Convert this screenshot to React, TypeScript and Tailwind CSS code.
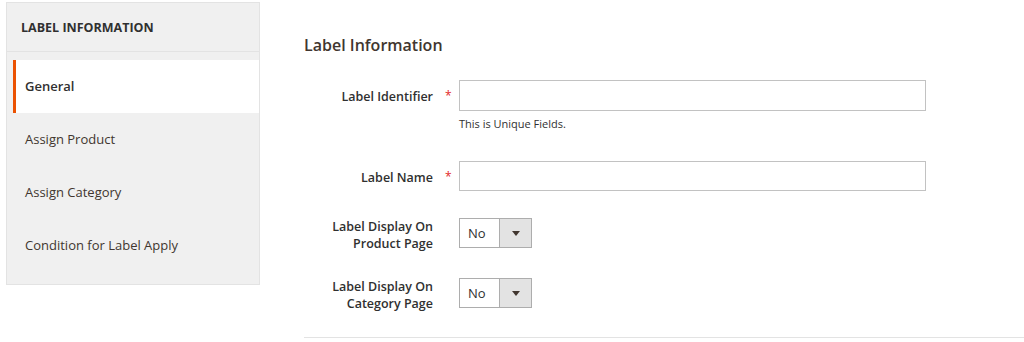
const tabs = ["Assign Product", "Assign Category", "Condition for Label Apply"];

function Field({ label, required, multi, children }: { label: React.ReactNode; required?: boolean; multi?: boolean; children: React.ReactNode }) {
  return (
    <div className="flex items-start">
      <div className={`w-[129px] shrink-0 text-right text-[12.5px] font-semibold leading-[17px] text-[#303030] ${multi ? "pt-0" : "pt-[8px]"}`}>{label}</div>
      <div className="w-[26px] shrink-0 pl-[12px] pt-[7px] text-[12px] leading-[17px] text-[#e22626]">{required ? "*" : ""}</div>
      <div className="flex-1">{children}</div>
    </div>
  );
}

function Select() {
  return (
    <div className="flex h-[30px] w-[73px] border border-[#adadad] bg-white">
      <div className="flex-1 pl-[8px] text-[13px] leading-[28px] text-[#303030]">No</div>
      <div className="flex w-[32px] items-center justify-center border-l border-[#adadad] bg-[#e3e3e3]">
        <svg width="8" height="5" viewBox="0 0 8 5"><path d="M0 0h8L4 5z" fill="#41362f" /></svg>
      </div>
    </div>
  );
}

export default function App() {
  return (
    <div className="flex h-[342px] w-[1024px] bg-white font-['Open_Sans',sans-serif] text-[#303030]">
      <div className="ml-[6px] mt-[2px] w-[254px] self-start border border-[#e3e3e3] bg-[#f0f0f0]">
        <div className="h-[49px] border-b border-[#e3e3e3] pl-[14px] text-[12.5px] font-bold leading-[49px] text-[#303030]">LABEL INFORMATION</div>
        <div className="ml-[6px] mt-[8px] flex h-[53px] items-center border-l-[3px] border-[#eb5202] bg-white pl-[9px] text-[13px] font-semibold">General</div>
        <div className="pb-[12px]">
          {tabs.map((t) => (
            <div key={t} className="flex h-[53px] items-center pl-[18px] text-[13px] text-[#41362f]">{t}</div>
          ))}
        </div>
      </div>
      <div className="ml-[44px] flex flex-1 flex-col">
        <h2 className="mt-[35px] text-[16px] font-semibold leading-[21px] text-[#41362f]">Label Information</h2>
        <div className="mt-[24px] flex flex-col">
          <Field label="Label Identifier" required>
            <div className="h-[31px] w-[467px] border border-[#c2c2c2] bg-white" />
            <div className="mt-[6px] text-[11px] leading-[14px] text-[#303030]">This is Unique Fields.</div>
          </Field>
          <div className="mt-[30px]">
            <Field label="Label Name" required>
              <div className="h-[30px] w-[467px] border border-[#c2c2c2] bg-white" />
            </Field>
          </div>
          <div className="mt-[27px]">
            <Field multi label={<>Label Display On<br />Product Page</>}>
              <Select />
            </Field>
          </div>
          <div className="mt-[26px]">
            <Field multi label={<>Label Display On<br />Category Page</>}>
              <Select />
            </Field>
          </div>
        </div>
        <div className="mt-auto mb-[4px] border-t border-[#e3e3e3]" />
      </div>
    </div>
  );
}
